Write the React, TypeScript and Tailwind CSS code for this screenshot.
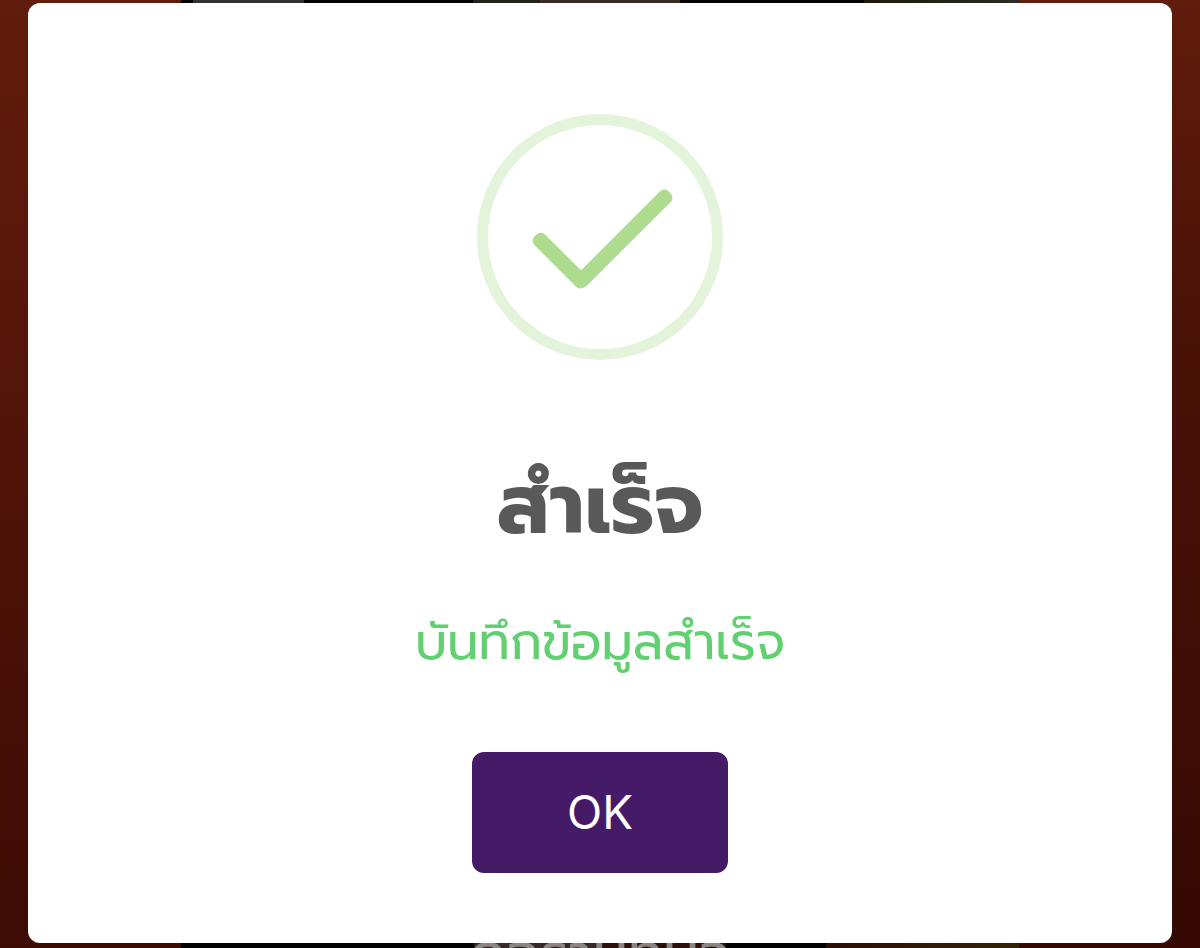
function Backdrop() {
  return (
    <div aria-hidden="true" className="absolute inset-0 -z-10 flex">
      <div className="w-[15.1%] bg-linear-to-b from-[#601c0c] via-[#54150a] via-40% to-[#3c0b04]" />
      <div className="flex grow flex-col justify-between bg-[#030202]">
        <div className="flex h-4">
          <div className="ml-[1.4%] w-[13.3%] bg-[#333130]" />
          <div className="ml-[20.2%] w-[8%] bg-[#24231b]" />
          <div className="w-[16.6%] bg-[#3a2a24]" />
          <div className="ml-auto w-[18.5%] bg-linear-to-r from-[#1c190c] to-[#2c2a22]" />
        </div>
        <div className="relative flex h-4 justify-center">
          <div className="w-[15%] bg-[#35292a]" />
          <div className="w-[15%] bg-[#2c100c]" />
          <div className="absolute inset-y-0 right-0 w-[23%] bg-linear-to-r from-[#2b0e06] to-[#332208]" />
          <span className="absolute bottom-[-43px] left-1/2 -translate-x-1/2 text-[56px] leading-[72px] whitespace-nowrap text-[#8b8583]">
            ดอรานทบว
          </span>
        </div>
      </div>
      <div className="w-[15.1%] bg-linear-to-b from-[#601c0c] via-[#4a1207] via-35% to-[#350904]" />
    </div>
  );
}

export default function App() {
  return (
    <div className="relative isolate flex min-h-screen flex-col overflow-hidden px-7 pt-[3px] pb-[5px] font-['Prompt','Kanit','Noto_Sans_Thai','Noto_Sans',sans-serif]">
      <Backdrop />
      <main
        role="dialog"
        aria-labelledby="title"
        aria-describedby="message"
        className="flex grow flex-col items-center rounded-xl bg-white pt-[111px] pb-[70px] text-center"
      >
        <svg viewBox="0 0 246 246" className="size-[246px]" fill="none" aria-hidden="true">
          <circle cx="123" cy="123" r="117.5" stroke="#e4f4da" strokeWidth="11" />
          <g fill="#aedc8f">
            <rect x="-34" y="-7.5" width="71" height="15" rx="6" transform="translate(82.5 145.5) rotate(45)" />
            <rect x="-65" y="-7.5" width="131" height="15" rx="6" transform="translate(146 125) rotate(-45)" />
          </g>
        </svg>
        <h1 id="title" className="mt-[86px] text-[83px] leading-[120px] font-bold text-[#595959]">สำเร็จ</h1>
        <p id="message" className="mt-10 text-[50px] leading-[72px] text-[#60d070]">บันทึกข้อมูลสำเร็จ</p>
        <button type="button" className="mt-auto h-[121px] w-64 rounded-xl bg-[#451b68] font-['Inter',Arial,sans-serif] text-[46px] text-white">
          OK
        </button>
      </main>
    </div>
  );
}
